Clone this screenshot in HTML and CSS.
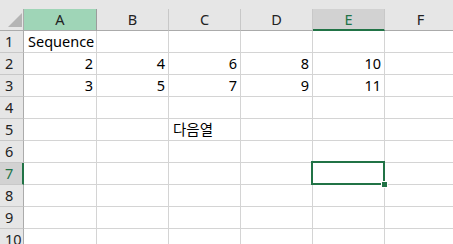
FILE: index.html
```html
<!DOCTYPE html>
<html lang="ko">
  <head>
    <meta charset="UTF-8" />
    <meta name="viewport" content="width=device-width, initial-scale=1.0" />
    <title>Sheet1</title>
    <link rel="stylesheet" href="styles.css">
  </head>
  <body>
    <div class="sheet">
      <div class="top-strip"></div>

      <div class="grid">
        <!-- column headers -->
        <div class="corner"><span class="corner-tri"></span></div>
        <div class="col-head col-a">A</div>
        <div class="col-head">B</div>
        <div class="col-head">C</div>
        <div class="col-head">D</div>
        <div class="col-head active">E</div>
        <div class="col-head">F</div>

        <div class="row-head">1</div>
        <div class="cell">Sequence</div>
        <div class="cell"></div>
        <div class="cell"></div>
        <div class="cell"></div>
        <div class="cell"></div>
        <div class="cell"></div>

        <div class="row-head">2</div>
        <div class="cell num">2</div>
        <div class="cell num">4</div>
        <div class="cell num">6</div>
        <div class="cell num">8</div>
        <div class="cell num">10</div>
        <div class="cell"></div>

        <div class="row-head">3</div>
        <div class="cell num">3</div>
        <div class="cell num">5</div>
        <div class="cell num">7</div>
        <div class="cell num">9</div>
        <div class="cell num">11</div>
        <div class="cell"></div>

        <div class="row-head">4</div>
        <div class="cell"></div>
        <div class="cell"></div>
        <div class="cell"></div>
        <div class="cell"></div>
        <div class="cell"></div>
        <div class="cell"></div>

        <div class="row-head">5</div>
        <div class="cell"></div>
        <div class="cell"></div>
        <div class="cell">다음열</div>
        <div class="cell"></div>
        <div class="cell"></div>
        <div class="cell"></div>

        <div class="row-head">6</div>
        <div class="cell"></div>
        <div class="cell"></div>
        <div class="cell"></div>
        <div class="cell"></div>
        <div class="cell"></div>
        <div class="cell"></div>

        <div class="row-head active">7</div>
        <div class="cell"></div>
        <div class="cell"></div>
        <div class="cell"></div>
        <div class="cell"></div>
        <div class="cell"></div>
        <div class="cell"></div>

        <div class="row-head">8</div>
        <div class="cell"></div>
        <div class="cell"></div>
        <div class="cell"></div>
        <div class="cell"></div>
        <div class="cell"></div>
        <div class="cell"></div>

        <div class="row-head">9</div>
        <div class="cell"></div>
        <div class="cell"></div>
        <div class="cell"></div>
        <div class="cell"></div>
        <div class="cell"></div>
        <div class="cell"></div>

        <div class="row-head">10</div>
        <div class="cell"></div>
        <div class="cell"></div>
        <div class="cell"></div>
        <div class="cell"></div>
        <div class="cell"></div>
        <div class="cell"></div>
      </div>

      <!-- selected cell E7 -->
      <div class="selection"><span class="fill-handle"></span></div>
    </div>
  </body>
</html>
```

FILE: styles.css
```css
* {
  box-sizing: border-box;
}
body {
  margin: 0;
  background: #fff;
  overflow: hidden;
  font-family: "Noto Sans", "Noto Sans CJK KR", sans-serif;
  font-size: 14.5px;
  color: #000;
}
.sheet {
  position: relative;
  width: 453px;
  height: 244px;
  overflow: hidden;
}
.top-strip {
  height: 9px;
  background: #e6e6e6;
}
.grid {
  display: grid;
  grid-template-columns: 24px 73px repeat(5, 72px);
  grid-auto-rows: 22px;
}
.corner {
  position: relative;
  background: #e6e6e6;
  border-right: 1px solid #ababab;
  border-bottom: 1px solid #ababab;
}
.corner-tri {
  position: absolute;
  right: 1px;
  bottom: 3px;
  width: 0;
  height: 0;
  border-left: 14px solid transparent;
  border-bottom: 14px solid #b4b4b4;
}
.col-head {
  background: #e6e6e6;
  border-right: 1px solid #c8c8c8;
  border-bottom: 1px solid #ababab;
  text-align: center;
  line-height: 21px;
  color: #222;
}
.col-head.col-a {
  background: #9fd5b7;
  border-right-color: #9c9c9c;
}
.col-head.active {
  background: #d2d2d2;
  color: #217346;
  border-bottom: 2px solid #217346;
}
.row-head {
  background: #e6e6e6;
  border-right: 1px solid #ababab;
  border-bottom: 1px solid #c8c8c8;
  padding-left: 5px;
  line-height: 21px;
  color: #222;
}
.row-head.active {
  background: #d2d2d2;
  color: #217346;
  border-right: 2px solid #217346;
}
.cell {
  border-right: 1px solid #d4d4d4;
  border-bottom: 1px solid #d4d4d4;
  padding: 0 3px 0 4px;
  line-height: 21px;
  white-space: nowrap;
}
.cell.num {
  text-align: right;
}
.selection {
  position: absolute;
  left: 311px;
  top: 161px;
  width: 74px;
  height: 24px;
  border: 2px solid #217346;
}
.fill-handle {
  position: absolute;
  right: -5px;
  bottom: -5px;
  width: 7px;
  height: 7px;
  background: #217346;
  border: 1px solid #fff;
}
```
